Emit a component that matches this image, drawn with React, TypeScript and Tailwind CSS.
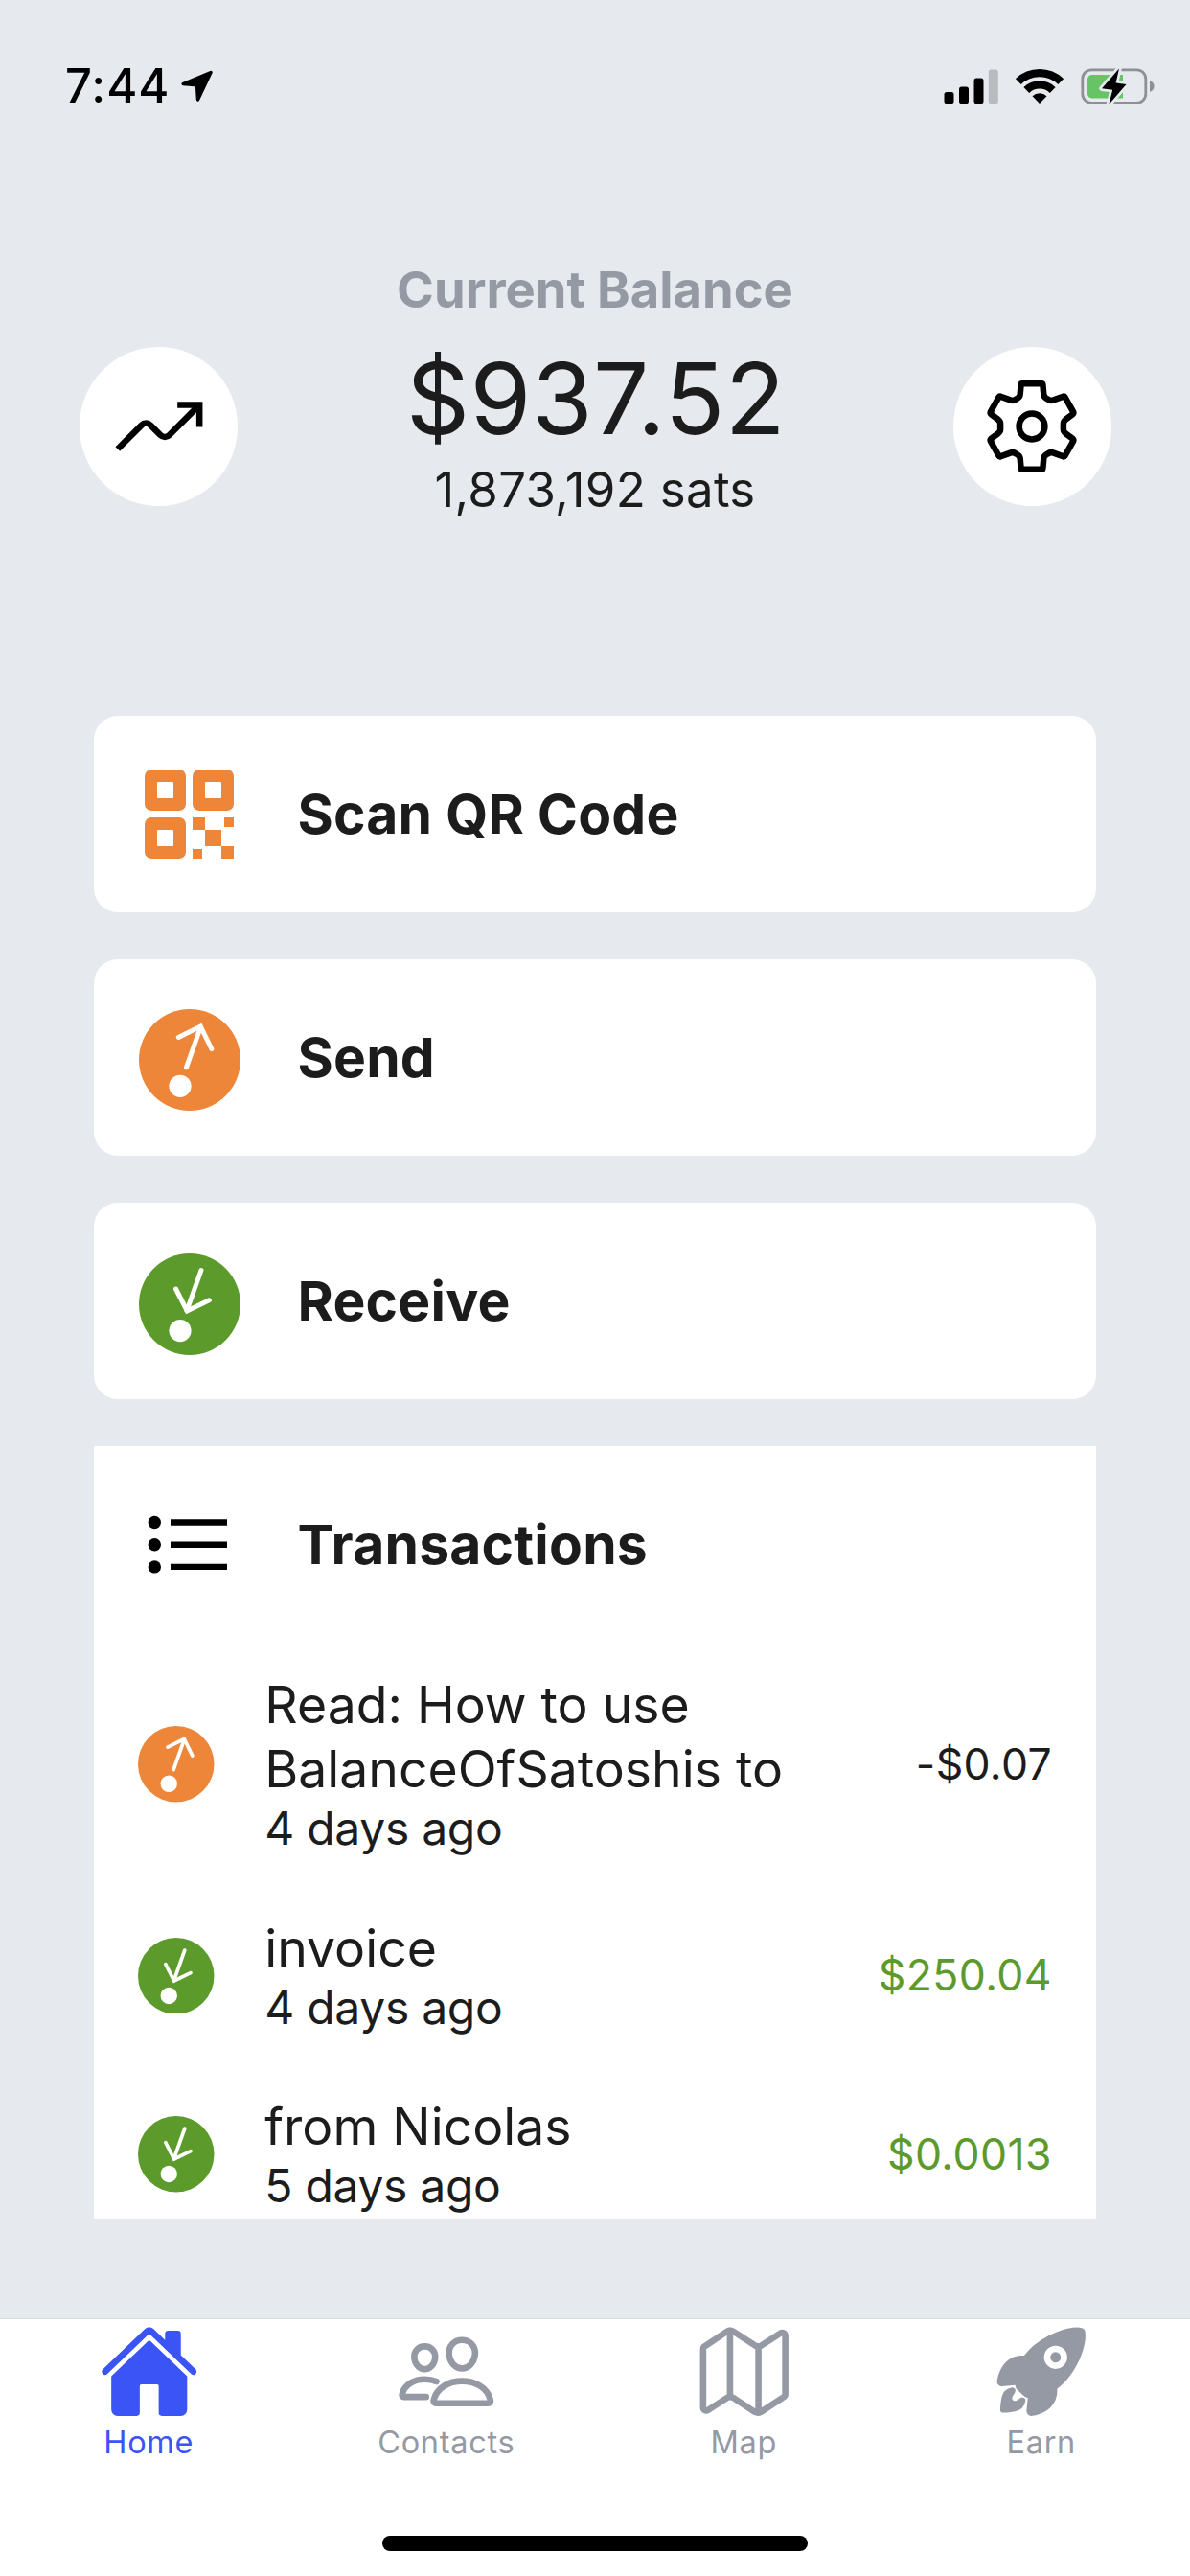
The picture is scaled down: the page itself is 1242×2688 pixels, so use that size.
import type { ReactNode } from 'react';
import { IoHome, IoMapOutline, IoPeopleOutline, IoRocket } from 'react-icons/io5';

function StatusBar() {
  return (
    <div className="flex h-[132px] items-start justify-between pt-[60px] pr-[36px] pl-[68px] text-black">
      <div className="flex h-[60px] items-center">
        <span className="text-[49px] leading-[60px] font-medium tracking-[1px]">7:44</span>
        <svg className="ml-[11px] h-[34px] w-[34px]" viewBox="0 0 34 34">
          <path d="M31 2.5 2.2 14.6 16.5 15.700 17.500 31Z" fill="black" stroke="black" strokeWidth="3.400" strokeLinejoin="round" />
        </svg>
      </div>
      <div className="flex h-[60px] items-center">
        <svg className="h-[36px] w-[57px]" viewBox="0 0 57 36">
          <rect x="0.5" y="24" width="10" height="12" rx="2.6" />
          <rect x="16" y="18.5" width="10" height="17.5" rx="2.6" />
          <rect x="31.5" y="9.5" width="10" height="26.5" rx="2.6" />
          <rect x="46.8" y="0.5" width="10" height="35.5" rx="2.6" fill="#b8bcbf" />
        </svg>
        <svg className="ml-[18px] h-[38px] w-[50px]" viewBox="0 0 50 38">
          <g fill="none" stroke="black" strokeWidth="8.2">
            <path d="M2.8 14.1A32 32 0 0 1 47.2 14.1" />
            <path d="M11.3 23A19.6 19.6 0 0 1 38.7 23" />
          </g>
          <path d="M17.5 29.2A11 11 0 0 1 32.5 29.2L25 37Z" />
        </svg>
        <svg className="ml-[18px] h-[40px] w-[78px]" viewBox="0 0 78 40">
          <rect x="1.8" y="2.8" width="66" height="34.6" rx="9.5" fill="none" stroke="#8e9093" strokeWidth="2.8" />
          <path d="M72 14v12c2.6-1 4.6-3 4.6-6s-2-5-4.6-6Z" fill="#8e9093" />
          <path d="M12 8H44V32.500H12A4.500 4.500 0 0 1 7 28V12.500A4.500 4.500 0 0 1 12 8Z" fill="#66c467" />
          <path
            d="M40 1.500 22 22.200 33.200 23.800 29.300 39 47.500 18 36.600 16.500Z"
            fill="black"
            stroke="#e6e9ee"
            strokeWidth="5.500"
            strokeLinejoin="round"
            paintOrder="stroke"
          />
        </svg>
      </div>
    </div>
  );
}

function TrendIcon() {
  return (
    <svg className="h-[105px] w-[105px]" viewBox="0 0 512 512" fill="none" stroke="black" strokeWidth="32">
      <path d="M352 144H464V256" />
      <path d="M48 368 169.400 246.600a32 32 0 0 1 45.200 0l50.800 50.800a32 32 0 0 0 45.200 0L456 152" />
    </svg>
  );
}

function GearIcon() {
  return (
    <svg
      className="h-[100px] w-[100px]"
      viewBox="-50 -50 100 100"
      fill="none"
      stroke="black"
      strokeWidth="6.500"
      strokeLinejoin="round"
    >
      <circle r="13.400" />
      <path d="M-10.200 -44.700H10.200Q11.300 -44.700 11.400 -43.600L12.300 -33.500Q12.700 -30.800 14.800 -29.600L17.500 -27.900Q20 -26.500 22.500 -27.600L32.600 -31.300Q33.900 -31.600 34.600 -30.500L43.200 -15.200Q43.700 -13.800 42.700 -12.900L35.300 -7.300Q32.800 -5.300 32.900 -2.800V2.800Q32.800 5.300 35.300 7.300L42.700 12.900Q43.700 13.800 43.200 15.200L34.600 30.500Q33.900 31.600 32.600 31.300L22.500 27.600Q20 26.500 17.500 27.900L14.800 29.600Q12.700 30.800 12.300 33.500L11.400 43.600Q11.300 44.700 10.200 44.700H-10.200Q-11.300 44.700 -11.400 43.600L-12.300 33.500Q-12.700 30.800 -14.800 29.600L-17.500 27.900Q-20 26.500 -22.500 27.600L-32.600 31.300Q-33.900 31.600 -34.600 30.500L-43.200 15.200Q-43.700 13.800 -42.700 12.900L-35.300 7.300Q-32.800 5.300 -32.900 2.800V-2.800Q-32.800 -5.300 -35.300 -7.300L-42.700 -12.900Q-43.700 -13.800 -43.200 -15.200L-34.600 -30.500Q-33.900 -31.600 -32.600 -31.300L-22.500 -27.600Q-20 -26.500 -17.500 -27.900L-14.800 -29.600Q-12.700 -30.800 -12.300 -33.500L-11.400 -43.600Q-11.300 -44.700 -10.200 -44.700Z" />
    </svg>
  );
}

function QrIcon() {
  const finder =
    'M7 0H36a7 7 0 0 1 7 7V36a7 7 0 0 1-7 7H7a7 7 0 0 1-7-7V7a7 7 0 0 1 7-7ZM13 14V29a1 1 0 0 0 1 1H29a1 1 0 0 0 1-1V14a1 1 0 0 0-1-1H14a1 1 0 0 0-1 1Z';
  return (
    <svg className="h-[93px] w-[93px]" viewBox="0 0 93 93" fill="#ee863a" fillRule="evenodd">
      <path d={finder} />
      <path transform="translate(50 0)" d={finder} />
      <path transform="translate(0 50)" d={finder} />
      <path d="M50 50H63V63H50ZM83 50H93V60H83ZM63 63H80V80H63ZM80 80H93V93H80ZM50 83H60V93H50Z" />
    </svg>
  );
}

function SendIcon({ className }: { className: string }) {
  return (
    <svg className={className} viewBox="0 0 106 106">
      <circle cx="53" cy="53" r="53" fill="#ee863a" />
      <g fill="none" stroke="white" strokeWidth="5" strokeLinecap="round">
        <path d="M49.500 60.800 64.500 18.500" />
        <path d="M41.300 29.500 64.300 18 75.800 41.500" />
      </g>
      <circle cx="43" cy="80.300" r="11.600" fill="white" />
    </svg>
  );
}

function ReceiveIcon({ className }: { className: string }) {
  return (
    <svg className={className} viewBox="0 0 106 106">
      <circle cx="53" cy="53" r="53" fill="#5c9a2c" />
      <g fill="none" stroke="white" strokeWidth="5" strokeLinecap="round">
        <path d="M65 17.500 50 59.500" />
        <path d="M38.500 37 50.300 60 73.300 48.800" />
      </g>
      <circle cx="43" cy="80.600" r="11.600" fill="white" />
    </svg>
  );
}

function ListIcon() {
  return (
    <svg className="h-[105px] w-[105px]" viewBox="0 0 105 105">
      <circle cx="16.300" cy="29.500" r="6.700" />
      <circle cx="16.300" cy="52.700" r="6.700" />
      <circle cx="16.300" cy="75.900" r="6.700" />
      <path d="M33 29.500H92M33 52.700H92M33 75.900H92" stroke="black" strokeWidth="6.400" />
    </svg>
  );
}

function Row({ icon, label, className }: { icon: ReactNode; label: string; className: string }) {
  return (
    <div className={`flex h-[205.2px] w-full shrink-0 items-center bg-white pl-[46.5px] ${className}`}>
      <div className="flex w-[106px] items-center justify-center">{icon}</div>
      <span className="ml-[60px] pt-px text-[57px] leading-[72px] font-bold tracking-[0.2px]">{label}</span>
    </div>
  );
}

const transactions = [
  { title: 'Read: How to use BalanceOfSatoshis to', date: '4 days ago', amount: '-$0.07', sent: true },
  { title: 'invoice', date: '4 days ago', amount: '$250.04', sent: false },
  { title: 'from Nicolas', date: '5 days ago', amount: '$0.0013', sent: false },
];

const tabs = [
  { label: 'Home', Icon: IoHome, active: true },
  { label: 'Contacts', Icon: IoPeopleOutline, active: false },
  { label: 'Map', Icon: IoMapOutline, active: false },
  { label: 'Earn', Icon: IoRocket, active: false },
];

export default function App() {
  return (
    <div className="flex h-[2688px] w-[1242px] flex-col overflow-hidden bg-[#e6e9ee] font-['Inter',sans-serif] text-[#1c1c1c]">
      <StatusBar />

      <header className="mt-[140px] flex h-[269px] items-start justify-between pr-[82.500px] pl-[82.500px]">
        <button className="mt-[90px] flex h-[166px] w-[165px] items-center justify-center rounded-full bg-white">
          <TrendIcon />
        </button>
        <div className="flex flex-col items-center">
          <div className="text-[52.500px] leading-[60px] font-bold tracking-[0px] text-[#9499a4]">Current Balance</div>
          <div className="mt-[24px] pl-[2px] text-[103px] leading-[120px] tracking-[0.500px]">$937.52</div>
          <div className="mt-[5px] text-[51px] leading-[60px] tracking-[0.300px]">1,873,192 sats</div>
        </div>
        <button className="mt-[90px] flex h-[166px] w-[165px] items-center justify-center rounded-full bg-white">
          <GearIcon />
        </button>
      </header>

      <main className="mt-[205.700px] flex flex-col gap-[49px] px-[98px]">
        <Row className="rounded-[25px]" label="Scan QR Code" icon={<QrIcon />} />
        <Row className="rounded-[25px]" label="Send" icon={<SendIcon className="mt-[6px] h-[106px] w-[106px]" />} />
        <Row className="rounded-[25px]" label="Receive" icon={<ReceiveIcon className="mt-[6px] h-[106px] w-[106px]" />} />
        <section className="h-[805.500px] overflow-hidden bg-white">
          <Row className="" label="Transactions" icon={<ListIcon />} />
          {transactions.map((t) => (
            <div key={t.title} className="flex items-center py-[30.800px] pr-[46px] pl-[46.300px]">
              {t.sent ? (
                <SendIcon className="h-[79.500px] w-[79.500px] shrink-0" />
              ) : (
                <ReceiveIcon className="h-[79.500px] w-[79.500px] shrink-0" />
              )}
              <div className="ml-[52.500px] w-[580px]">
                <div className="text-[53.500px] leading-[67px]">{t.title}</div>
                <div className="text-[48px] leading-[58px] tracking-[-0.300px]">{t.date}</div>
              </div>
              <div
                className={
                  t.sent
                    ? 'ml-auto text-[44.500px] leading-[58px] tracking-[0.350px]'
                    : 'ml-auto text-[44.500px] leading-[58px] tracking-[0.450px] text-[#5c9a2c]'
                }
              >
                {t.amount}
              </div>
            </div>
          ))}
        </section>
      </main>

      <footer className="mt-auto flex h-[269px] flex-col items-center border-t border-[#d8d8d8] bg-white">
        <nav className="grid w-full grid-cols-4 pt-[2px]">
          {tabs.map(({ label, Icon, active }) => (
            <div
              key={label}
              className={
                active
                  ? 'flex flex-col items-center text-[#3b54f6]'
                  : 'flex flex-col items-center text-[#9499a4]'
              }
            >
              <Icon className="h-[105.500px] w-[105.500px]" />
              <span className="mt-[1px] text-[32.500px] leading-[40px] tracking-[0.700px]">{label}</span>
            </div>
          ))}
        </nav>
        <div className="mt-auto mb-[26.500px] h-[16px] w-[444px] rounded-full bg-black" />
      </footer>
    </div>
  );
}
